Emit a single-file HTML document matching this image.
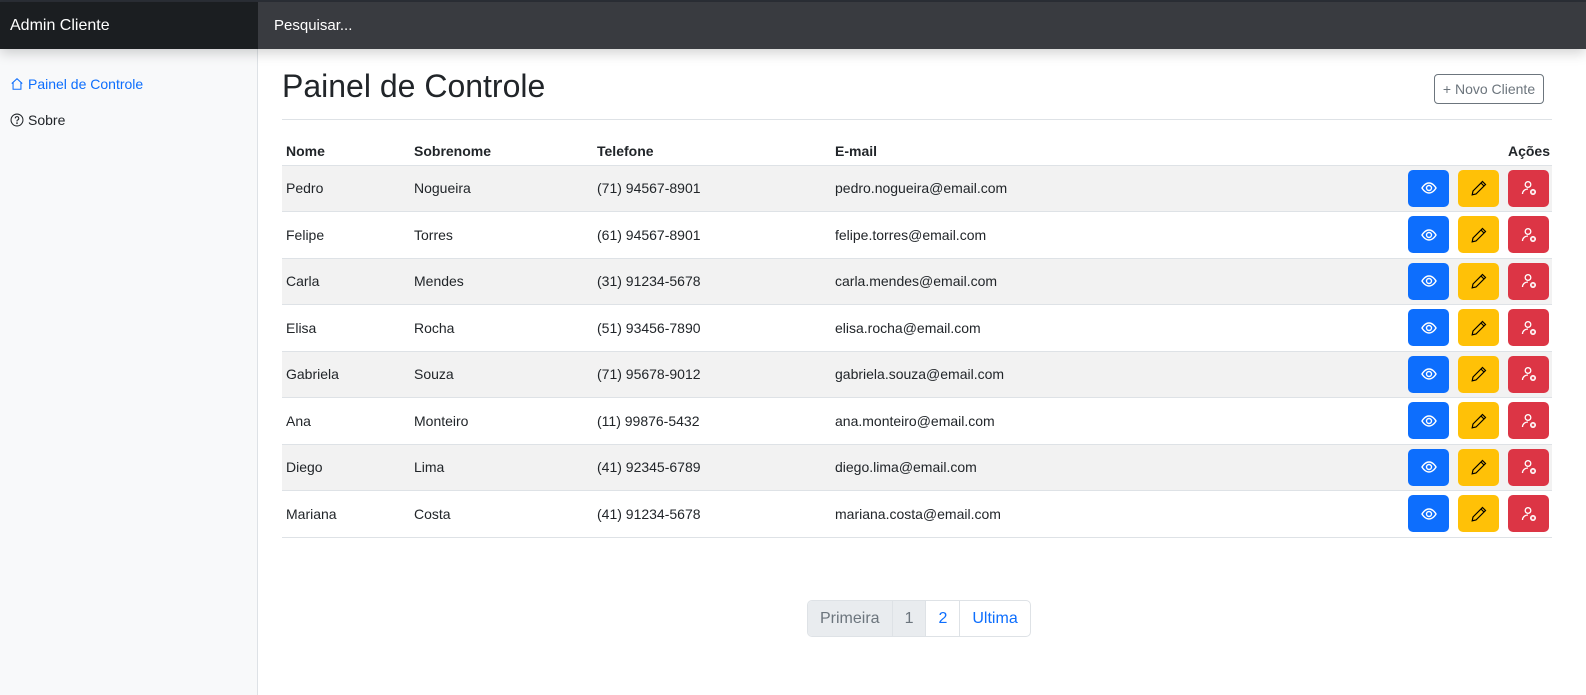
<!DOCTYPE html>
<html><head><meta charset="utf-8"><style>
*{box-sizing:border-box;margin:0;padding:0}
body{width:1586px;height:695px;overflow:hidden;font-family:"Liberation Sans",sans-serif;background:#fff;color:#212529;position:relative}
.top{position:absolute;top:0;left:0;width:1586px;height:2px;background:#2b2f36}
.nav{position:absolute;top:2px;left:0;width:1586px;height:47px;background:#393b40;box-shadow:0 4px 12px rgba(0,0,0,.18);z-index:2}
.brand{position:absolute;left:0;top:0;width:258px;height:47px;background:#1b1e21;color:#fff;font-size:16px;line-height:47px;padding-left:10px}
.search{position:absolute;left:274px;top:0;line-height:47px;color:#fff;font-size:15px}
.side{position:absolute;top:49px;left:0;width:258px;height:646px;background:#f8f9fa;border-right:1px solid #dee2e6}
.side div{position:absolute;left:10px;font-size:14px;display:flex;align-items:center;gap:4px}
h1{position:absolute;left:282px;top:68px;font-size:32px;font-weight:500}
.btn-new{position:absolute;left:1434px;top:74px;width:110px;height:30px;border:1px solid #6c757d;border-radius:4px;color:#6c757d;font-size:14px;text-align:center;line-height:28px}
.hr{position:absolute;left:282px;top:119px;width:1270px;height:1px;background:#dee2e6}
table{position:absolute;left:282px;top:140px;width:1270px;border-collapse:collapse;font-size:14px}
th{text-align:left;font-weight:bold;height:25px;padding:0 4px;border-bottom:1px solid #dee2e6;vertical-align:bottom;padding-bottom:6px}
td{height:46.5px;padding:0 4px;border-bottom:1px solid #dee2e6}
tbody tr:nth-child(odd){background:#f2f2f2}
.acts{display:flex;gap:9px;justify-content:flex-end;padding-right:0}
.b{width:41px;height:37px;border-radius:5px;display:flex;align-items:center;justify-content:center}
.pag{position:absolute;left:807px;top:600px;height:37px;display:flex;border:1px solid #dee2e6;border-radius:5px;overflow:hidden;font-size:16px}
.pag span{padding:0 12px;line-height:35px;border-left:1px solid #dee2e6;color:#0d6efd}
.pag span.g{background:#e9ecef;color:#6c757d}
.pag span:first-child{border-left:0}
</style></head><body>
<div class="top"></div>
<div class="nav"><div class="brand">Admin Cliente</div><div class="search">Pesquisar...</div></div>
<div class="side">
<div style="top:27px;color:#0d6efd"><svg width="14" height="14" viewBox="0 0 16 16" fill="none" stroke="#0d6efd" stroke-width="1.2"><path d="M2 7.5L8 2l6 5.5M3.5 6.5V14h9V6.5"/></svg>Painel de Controle</div>
<div style="top:63px"><svg width="14" height="14" viewBox="0 0 16 16" fill="none" stroke="#212529" stroke-width="1.2"><circle cx="8" cy="8" r="6.8"/><path d="M6 6.2a2 2 0 1 1 2.5 1.9c-.4.2-.5.5-.5 1v.6"/><circle cx="8" cy="11.6" r=".4" fill="#212529"/></svg>Sobre</div>
</div>
<h1>Painel de Controle</h1>
<div class="btn-new">+ Novo Cliente</div>
<div class="hr"></div>
<table>
<colgroup><col style="width:128px"><col style="width:183px"><col style="width:238px"><col><col style="width:200px"></colgroup>
<thead><tr><th>Nome</th><th>Sobrenome</th><th>Telefone</th><th>E-mail</th><th style="text-align:right;padding-right:2px">Ações</th></tr></thead>
<tbody>
<tr><td>Pedro</td><td>Nogueira</td><td>(71) 94567-8901</td><td>pedro.nogueira@email.com</td><td>A</td></tr>
<tr><td>Felipe</td><td>Torres</td><td>(61) 94567-8901</td><td>felipe.torres@email.com</td><td>A</td></tr>
<tr><td>Carla</td><td>Mendes</td><td>(31) 91234-5678</td><td>carla.mendes@email.com</td><td>A</td></tr>
<tr><td>Elisa</td><td>Rocha</td><td>(51) 93456-7890</td><td>elisa.rocha@email.com</td><td>A</td></tr>
<tr><td>Gabriela</td><td>Souza</td><td>(71) 95678-9012</td><td>gabriela.souza@email.com</td><td>A</td></tr>
<tr><td>Ana</td><td>Monteiro</td><td>(11) 99876-5432</td><td>ana.monteiro@email.com</td><td>A</td></tr>
<tr><td>Diego</td><td>Lima</td><td>(41) 92345-6789</td><td>diego.lima@email.com</td><td>A</td></tr>
<tr><td>Mariana</td><td>Costa</td><td>(41) 91234-5678</td><td>mariana.costa@email.com</td><td>A</td></tr>
</tbody></table>
<div class="pag"><span class="g">Primeira</span><span class="g">1</span><span>2</span><span>Ultima</span></div>
<script>
var acts='<div class="acts" style="padding-right:3px"><div class="b" style="background:#0d6efd"><svg width="16" height="16" viewBox="0 0 16 16" fill="none" stroke="#fff" stroke-width="1.4"><path d="M1 8s2.7-5 7-5 7 5 7 5-2.7 5-7 5-7-5-7-5z"/><circle cx="8" cy="8" r="2.5"/></svg></div><div class="b" style="background:#ffc107"><svg width="16" height="16" viewBox="0 0 16 16" fill="none" stroke="#000" stroke-width="1.2"><path d="M11.5 1.5l3 3L5 14l-3.8.8L2 11z M10 3l3 3"/></svg></div><div class="b" style="background:#dc3545"><svg width="16" height="16" viewBox="0 0 16 16" fill="none" stroke="#fff" stroke-width="1.3"><circle cx="7" cy="4.5" r="2.8"/><path d="M1.5 14c0-3 2.5-5 5.5-5"/><circle cx="12" cy="12" r="3" fill="#fff" stroke="none"/><path d="M10.8 10.8l2.4 2.4M13.2 10.8l-2.4 2.4" stroke="#dc3545" stroke-width="1"/></svg></div></div>';
document.querySelectorAll('tbody tr td:last-child').forEach(function(t){t.innerHTML=acts;t.style.padding='0'});
</script>
</body></html>
